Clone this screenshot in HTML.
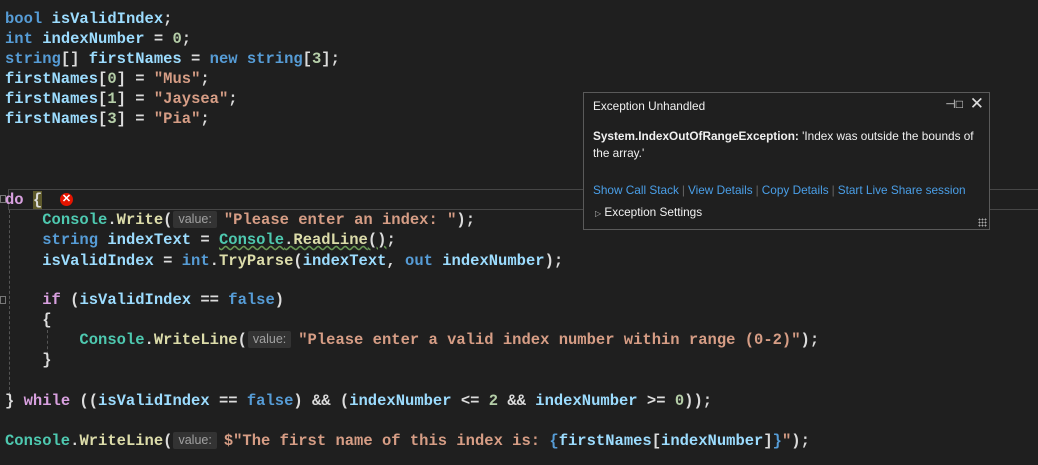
<!DOCTYPE html>
<html><head><meta charset="utf-8"><style>
body{margin:0;width:1038px;height:465px;background:#1f1f1f;overflow:hidden;position:relative;font-family:"Liberation Mono",monospace;}
.l{position:absolute;left:5px;height:20px;line-height:20px;font-size:15.5px;font-weight:bold;white-space:pre;color:#dcdcdc;}
.k{color:#569cd6}.v{color:#9cdcfe}.s{color:#d69d85}.n{color:#b5cea8}.t{color:#4ec9b0}.m{color:#dcdcaa}.c{color:#d8a0df}.p{color:#b4b4b4}
.h{display:inline-block;font-family:"Liberation Sans",sans-serif;font-weight:normal;font-size:12.5px;color:#a0a0a0;background:#333;border-radius:2px;height:17px;line-height:17px;padding:0 5px;margin:0 7px 0 1px;vertical-align:1px}
.pop{position:absolute;left:583px;top:92px;width:405px;height:136px;border:1px solid #5a5a5a;background:#1f1f1f;font-family:"Liberation Sans",sans-serif;font-size:11.8px;color:#f0f0f0}
.lk{color:#4a9fe8}
.sep{color:#666;margin:0 3px}
</style></head><body>
<div class="l" style="top:9px"><span class="k">bool</span> <span class="v">isValidIndex</span>;</div>
<div class="l" style="top:29px"><span class="k">int</span> <span class="v">indexNumber</span> = <span class="n">0</span>;</div>
<div class="l" style="top:49px"><span class="k">string</span>[] <span class="v">firstNames</span> = <span class="k">new</span> <span class="k">string</span>[<span class="n">3</span>];</div>
<div class="l" style="top:69px"><span class="v">firstNames</span>[<span class="n">0</span>] = <span class="s">"Mus"</span>;</div>
<div class="l" style="top:89px"><span class="v">firstNames</span>[<span class="n">1</span>] = <span class="s">"Jaysea"</span>;</div>
<div class="l" style="top:109px"><span class="v">firstNames</span>[<span class="n">3</span>] = <span class="s">"Pia"</span>;</div>
<div style="position:absolute;left:8px;top:189px;width:1040px;height:19px;border:1px solid #464646;border-right:none"></div>
<div style="position:absolute;left:0;top:195px;width:6px;height:8px;border:1px solid #777;box-sizing:border-box"></div>
<div style="position:absolute;left:0;top:296px;width:6px;height:8px;border:1px solid #777;box-sizing:border-box"></div>
<div style="position:absolute;left:9px;top:210px;height:190px;border-left:1px dashed #555"></div>
<div style="position:absolute;left:47px;top:330px;height:30px;border-left:1px dashed #555"></div>
<div class="l" style="top:190px"><span class="c">do</span> <span style="background:#5e5a2c;color:#dcdcdc">{</span></div>
<div style="position:absolute;left:60px;top:193px;width:13px;height:13px;border-radius:50%;background:#e51400;color:#fff;font:bold 11px/13px 'Liberation Sans',sans-serif;text-align:center">✕</div>
<div class="l" style="top:210px">    <span class="t">Console</span>.<span class="m">Write</span>(<span class="h">value:</span><span class="s">"Please enter an index: "</span>);</div>
<div class="l" style="top:230px">    <span class="k">string</span> <span class="v">indexText</span> = <span class="t" style="text-decoration:underline wavy #6a9955">Console</span><span style="text-decoration:underline wavy #6a9955">.<span class="m">ReadLine</span>()</span>;</div>
<div class="l" style="top:251px">    <span class="v">isValidIndex</span> = <span class="k">int</span>.<span class="m">TryParse</span>(<span class="v">indexText</span>, <span class="k">out</span> <span class="v">indexNumber</span>);</div>
<div class="l" style="top:290px">    <span class="c">if</span> (<span class="v">isValidIndex</span> == <span class="k">false</span>)</div>
<div class="l" style="top:310px">    {</div>
<div class="l" style="top:330px">        <span class="t">Console</span>.<span class="m">WriteLine</span>(<span class="h">value:</span><span class="s">"Please enter a valid index number within range (0-2)"</span>);</div>
<div class="l" style="top:350px">    }</div>
<div class="l" style="top:391px">} <span class="c">while</span> ((<span class="v">isValidIndex</span> == <span class="k">false</span>) &amp;&amp; (<span class="v">indexNumber</span> &lt;= <span class="n">2</span> &amp;&amp; <span class="v">indexNumber</span> &gt;= <span class="n">0</span>));</div>
<div class="l" style="top:431px"><span class="t">Console</span>.<span class="m">WriteLine</span>(<span class="h">value:</span><span class="s">$"The first name of this index is: </span><span class="k">{</span><span class="v">firstNames</span>[<span class="v">indexNumber</span>]<span class="k">}</span><span class="s">"</span>);</div>
<div class="pop">
<div style="position:absolute;left:9px;top:6px">Exception Unhandled</div>
<div style="position:absolute;right:26px;top:4px;color:#ddd;font-size:12px">⊣□</div>
<div style="position:absolute;right:5px;top:1px;color:#ddd;font-size:17px">✕</div>
<div style="position:absolute;left:9px;top:35px;width:385px;line-height:17px"><b>System.IndexOutOfRangeException:</b> 'Index was outside the bounds of the array.'</div>
<div style="position:absolute;left:9px;top:90px;white-space:nowrap"><span class="lk">Show Call Stack</span><span class="sep">|</span><span class="lk">View Details</span><span class="sep">|</span><span class="lk">Copy Details</span><span class="sep">|</span><span class="lk">Start Live Share session</span></div>
<div style="position:absolute;left:11px;top:112px;white-space:nowrap"><span style="font-size:8px;color:#bbb">▷</span> Exception Settings</div>
<div style="position:absolute;right:2px;bottom:2px;width:9px;height:9px;background:radial-gradient(#aaa 0.8px,transparent 1px) 0 0/3px 3px"></div>
</div>
</body></html>
